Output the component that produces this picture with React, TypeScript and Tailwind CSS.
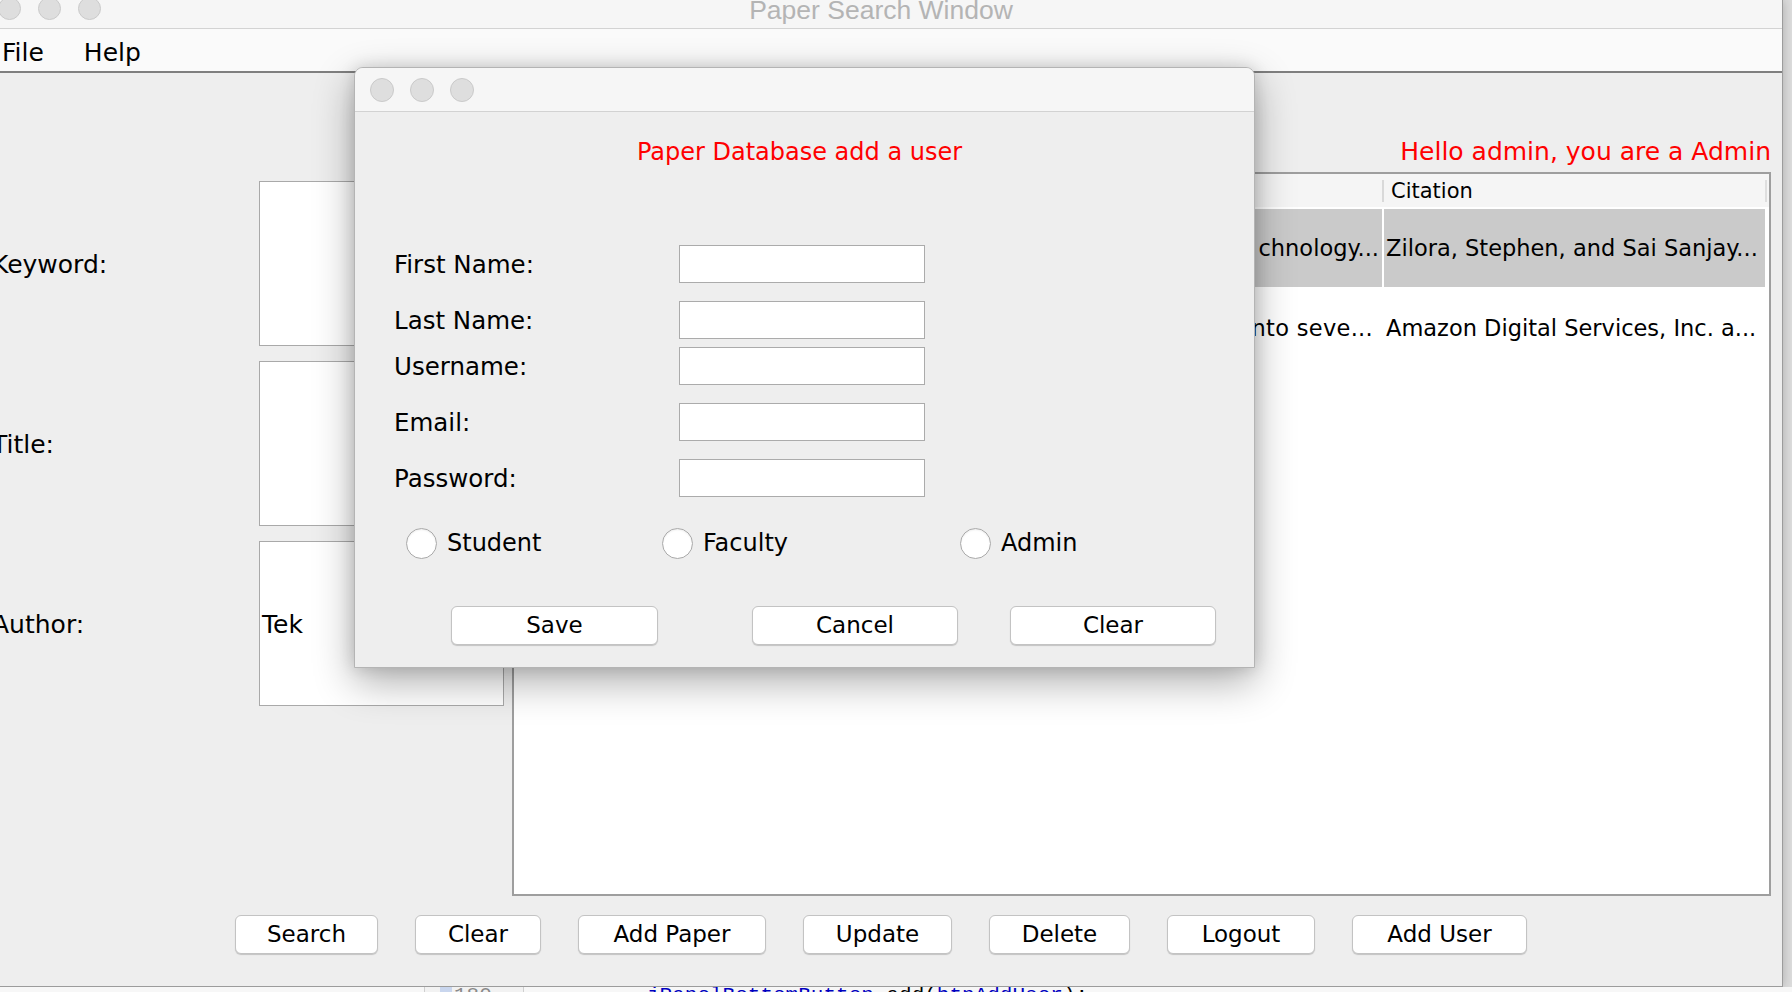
import React from "react";

function Lights({ size }: { size: "main" | "dialog" }) {
  const cls =
    size === "main"
      ? "w-[23px] h-[23px] rounded-full bg-[#dedede] border border-[#cacaca]"
      : "w-[24px] h-[24px] rounded-full bg-[#dedede] border border-[#cacaca]";
  return (
    <>
      <div className={cls} />
      <div className={cls} />
      <div className={cls} />
    </>
  );
}

function AquaButton({ label, w }: { label: string; w: string }) {
  return (
    <div
      className={`${w} h-[39px] shrink-0 bg-white border border-[#c3c3c3] rounded-[6px] shadow-[0_1px_1px_rgba(0,0,0,0.18)] flex items-center justify-center text-[23px] leading-none text-black`}
    >
      {label}
    </div>
  );
}

function FieldRow({ label, top }: { label: string; top: string }) {
  return (
    <div className={`${top} flex items-center h-[38px] pl-[39px]`}>
      <div className="w-[285px] text-[24.5px] leading-none pt-[2px]">{label}</div>
      <div className="w-[246px] h-[38px] bg-white border border-[#ababab]" />
    </div>
  );
}

function Radio({ label, w }: { label: string; w: string }) {
  return (
    <div className={`${w} flex items-center gap-[10px]`}>
      <div className="w-[31px] h-[31px] rounded-full bg-white border border-[#a9a9a9] shadow-[inset_0_1px_2px_rgba(0,0,0,0.08)]" />
      <span className="text-[24px] leading-none">{label}</span>
    </div>
  );
}

function SearchRow({ label, text }: { label: string; text?: string }) {
  return (
    <div className="flex items-center h-[165px]">
      <div className="w-[267px] ml-[-8px] text-[25px] leading-none whitespace-nowrap pt-[2px]">{label}</div>
      <div className="w-[245px] h-[165px] bg-white border border-[#a9a9a9] flex items-center pl-[2px] pt-[2px] text-[25px] leading-none">
        {text}
      </div>
    </div>
  );
}

export default function App() {
  return (
    <div className="relative w-[1792px] h-[992px] overflow-hidden bg-[#dcdcdc] font-['DejaVu_Sans',sans-serif] text-black">
      {/* Main window */}
      <div className="flex flex-col w-[1783px] h-[987px] bg-[#eeeeee] border-r border-b border-[#9c9c9c] shadow-[0_0_10px_rgba(0,0,0,0.22)]">
        {/* Title bar */}
        <div className="relative h-[29px] shrink-0 bg-[#f6f6f6] border-b border-[#d3d3d3] flex justify-center pr-[20px] overflow-hidden">
          <div className="absolute left-[-2px] top-[-3px] flex gap-[17px]">
            <Lights size="main" />
          </div>
          <span className="mt-[-3px] font-['Liberation_Sans',sans-serif] text-[26.5px] leading-none text-[#b4b4b4]">
            Paper Search Window
          </span>
        </div>

        {/* Menu bar */}
        <div className="h-[44px] shrink-0 bg-[#fafafa] border-b-2 border-[#7f7f7f] flex items-center pt-[5px] text-[25px] leading-none">
          <span className="ml-[2px]">File</span>
          <span className="ml-[40px]">Help</span>
        </div>

        {/* Content */}
        <div className="flex-1 flex flex-col">
          <div className="flex h-[823px]">
            <div className="w-[512px] shrink-0 flex flex-col gap-[15px] pt-[108px]">
              <SearchRow label="Keyword:" />
              <SearchRow label="Title:" />
              <SearchRow label="Author:" text="Tek" />
            </div>
            <div className="w-[1259px] shrink-0 flex flex-col">
              <div className="h-[99px] flex items-end justify-end pb-[5px] text-[25px] leading-[30px] text-[#ff0000] whitespace-nowrap">
                Hello admin, you are a Admin
              </div>
              <div className="h-[724px] border-2 border-[#9e9e9e] bg-white flex flex-col overflow-hidden">
                {/* header */}
                <div className="h-[33px] mb-[2px] bg-[#f5f5f5] flex items-center">
                  <div className="w-[868px] shrink-0" />
                  <div className="w-[2px] h-[22px] bg-[#d9d9d9] shrink-0" />
                  <div className="w-[381px] shrink-0 pl-[7px] pt-[1px] text-[21px] leading-none">Citation</div>
                  <div className="w-[2px] h-[22px] bg-[#dedede] shrink-0" />
                </div>
                {/* row 1 (selected) */}
                <div className="h-[78px] flex text-[22.5px] leading-none whitespace-nowrap">
                  <div className="w-[868px] shrink-0 bg-[#cacaca] flex items-center justify-end pr-[3px] overflow-hidden">
                    chnology...
                  </div>
                  <div className="w-[2px] shrink-0 bg-white" />
                  <div className="w-[381px] shrink-0 bg-[#cacaca] flex items-center pl-[2px] overflow-hidden">
                    Zilora, Stephen, and Sai Sanjay...
                  </div>
                </div>
                {/* row 2 */}
                <div className="h-[78px] flex text-[22.5px] leading-none whitespace-nowrap pt-[4px]">
                  <div className="w-[868px] shrink-0 flex items-center justify-end pr-[9px] overflow-hidden tracking-[0.3px]">
                    into seve...
                  </div>
                  <div className="w-[2px] shrink-0" />
                  <div className="w-[381px] shrink-0 flex items-center pl-[2px] overflow-hidden">
                    Amazon Digital Services, Inc. a...
                  </div>
                </div>
              </div>
            </div>
          </div>

          {/* Bottom buttons */}
          <div className="mt-[19px] flex gap-[37px] pl-[235px]">
            <AquaButton label="Search" w="w-[143px]" />
            <AquaButton label="Clear" w="w-[126px]" />
            <AquaButton label="Add Paper" w="w-[188px]" />
            <AquaButton label="Update" w="w-[149px]" />
            <AquaButton label="Delete" w="w-[141px]" />
            <AquaButton label="Logout" w="w-[148px]" />
            <AquaButton label="Add User" w="w-[175px]" />
          </div>
        </div>
      </div>

      {/* Editor window peeking below */}
      <div className="h-[5px] flex bg-[#f7f7f7] overflow-hidden">
        <div className="ml-[424px] w-[100px] shrink-0 border-x border-[#cfcfcf] bg-[#f2f2f2] flex">
          <div className="ml-[15px] w-[12px] h-[5px] bg-[#c9d6ee]" />
          <span className="ml-[2px] mt-[-2px] font-['Liberation_Mono',monospace] text-[21px] leading-none text-[#8a8a8a]">
            180
          </span>
        </div>
        <span className="ml-[123px] mt-[-2px] font-['Liberation_Mono',monospace] text-[21px] leading-none whitespace-nowrap">
          <span className="text-[#0000c0]">jPanelBottomButton</span>
          <span className="text-black">.add(</span>
          <span className="text-[#0000c0]">btnAddUser</span>
          <span className="text-black">);</span>
        </span>
      </div>

      {/* Dialog window */}
      <div className="absolute left-[354px] top-[67px] w-[901px] h-[601px] flex flex-col bg-[#eeeeee] border border-[#b4b4b4] rounded-t-[9px] overflow-hidden shadow-[0_14px_40px_rgba(0,0,0,0.32),0_0_16px_rgba(0,0,0,0.14)]">
        <div className="h-[44px] shrink-0 bg-[#f6f6f6] border-b border-[#d2d2d2] flex items-center gap-[16px] pl-[15px]">
          <Lights size="dialog" />
        </div>
        <div className="flex flex-col">
          <div className="mt-[25px] h-[30px] leading-[30px] text-center pr-[10px] text-[24px] text-[#ff0000]">
            Paper Database add a user
          </div>
          <FieldRow label="First Name:" top="mt-[78px]" />
          <FieldRow label="Last Name:" top="mt-[18px]" />
          <FieldRow label="Username:" top="mt-[8px]" />
          <FieldRow label="Email:" top="mt-[18px]" />
          <FieldRow label="Password:" top="mt-[18px]" />
          <div className="mt-[27px] h-[38px] flex items-center pl-[51px]">
            <Radio label="Student" w="w-[256px]" />
            <Radio label="Faculty" w="w-[298px]" />
            <Radio label="Admin" w="w-[200px]" />
          </div>
          <div className="mt-[44px] flex pl-[96px]">
            <AquaButton label="Save" w="w-[207px]" />
            <div className="w-[94px] shrink-0" />
            <AquaButton label="Cancel" w="w-[206px]" />
            <div className="w-[52px] shrink-0" />
            <AquaButton label="Clear" w="w-[206px]" />
          </div>
        </div>
      </div>
    </div>
  );
}
